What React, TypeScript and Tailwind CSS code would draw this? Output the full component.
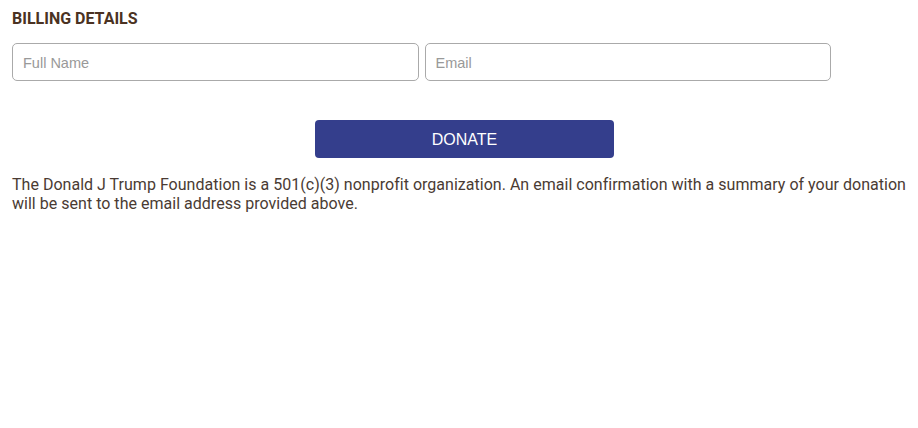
export default function App() {
  return (
    <div className="bg-white min-h-screen px-3 pt-[9px]" style={{ fontFamily: 'Roboto, "Liberation Sans", sans-serif' }}>
      <h3 className="text-[16px] font-bold uppercase text-[#4b3222] leading-[19px]">Billing Details</h3>

      <div className="mt-[15px] flex gap-[6px] w-[819px]">
        <input
          type="text"
          placeholder="Full Name"
          className="flex-1 h-[38px] rounded-[5px] border border-[#aaaaaa] px-[10px] pt-[2px] text-[14.5px] text-[#333] placeholder:text-[#999] outline-none"
          style={{ fontFamily: '"Liberation Sans", Arial, sans-serif' }}
        />
        <input
          type="email"
          placeholder="Email"
          className="flex-1 h-[38px] rounded-[5px] border border-[#aaaaaa] px-[10px] pt-[2px] text-[14.5px] text-[#333] placeholder:text-[#999] outline-none"
          style={{ fontFamily: '"Liberation Sans", Arial, sans-serif' }}
        />
      </div>

      <div className="mt-[39px] pl-[303px]">
        <button
          type="button"
          className="w-[299px] h-[38px] rounded-[4px] bg-[#343e8c] pt-[2px] text-white text-[16px]"
          style={{ fontFamily: '"Liberation Sans", Arial, sans-serif' }}
        >
          DONATE
        </button>
      </div>

      <p className="mt-[17px] -mr-3 text-[16px] leading-[19px] tracking-[0.02px] text-[#4a3b33]">
        The Donald J Trump Foundation is a 501(c)(3) nonprofit organization. An email confirmation with a summary of your donation will be sent to the email address provided above.
      </p>
    </div>
  );
}
